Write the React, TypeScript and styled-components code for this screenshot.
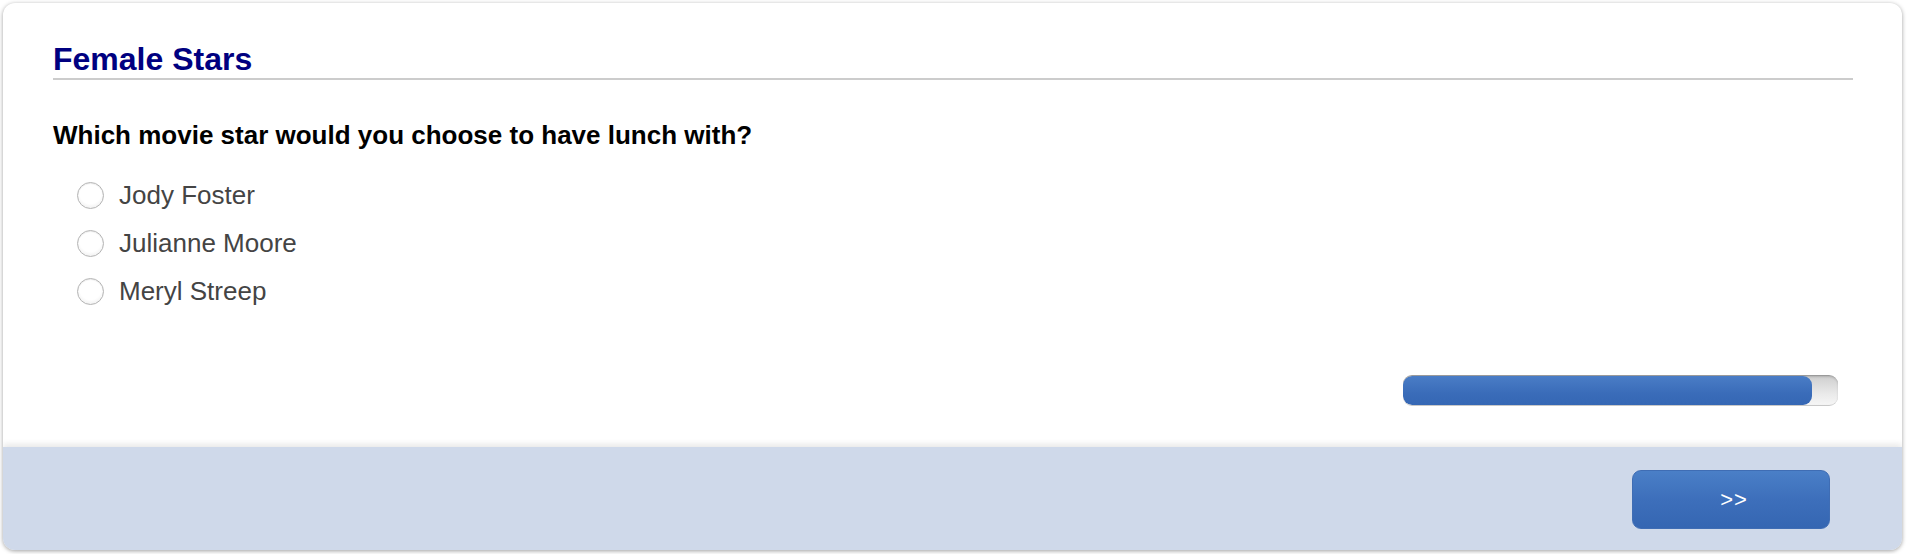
import React from "react";
import styled, { createGlobalStyle } from "styled-components";

const Global = createGlobalStyle`
  html, body { margin: 0; padding: 0; background: #ffffff; }
  body { font-family: "Liberation Sans", Arial, Helvetica, sans-serif; }
  * { box-sizing: border-box; }
`;

const Page = styled.div`
  padding: 3px 6px 4px 3px;
`;

const Card = styled.div`
  height: 547px;
  background: #ffffff;
  border-radius: 12px;
  box-shadow: 0 1px 4px rgba(0, 0, 0, 0.38);
  display: flex;
  flex-direction: column;
  overflow: hidden;
`;

const Body = styled.div`
  flex: 1;
  padding: 38px 49px 0 50px;
  display: flex;
  flex-direction: column;
`;

const Title = styled.h1`
  margin: 0;
  font-size: 32px;
  line-height: 36px;
  font-weight: 700;
  color: #000080;
  padding-bottom: 1px;
  border-bottom: 2px solid #cccccc;
`;

const Question = styled.div`
  margin-top: 40px;
  font-size: 26px;
  line-height: 30px;
  font-weight: 700;
  color: #000000;
`;

const Options = styled.div`
  margin-top: 21px;
  padding-left: 24px;
  display: flex;
  flex-direction: column;
`;

const Option = styled.label`
  height: 48px;
  display: flex;
  align-items: center;
  gap: 15px;
  font-size: 26px;
  color: #444444;
  cursor: pointer;
`;

const Radio = styled.span`
  width: 27px;
  height: 27px;
  border-radius: 50%;
  border: 1px solid #b4b4b4;
  background: radial-gradient(circle at 50% 40%, #ffffff 55%, #f0f0f0 80%, #e2e2e2 100%);
  box-shadow: inset 0 1px 1px rgba(0, 0, 0, 0.08);
  flex: none;
`;

const ProgressRow = styled.div`
  margin-top: 60px;
  display: flex;
  justify-content: flex-end;
  padding-right: 15px;
`;

const Track = styled.div`
  width: 435px;
  height: 31px;
  border-radius: 9px;
  background: linear-gradient(#cfcfcf, #e9e9e9 60%, #f6f6f6);
  border-top: 1px solid #9a9a9a;
  border-bottom: 1px solid #c8c8c8;
  box-shadow: inset 0 1px 2px rgba(0, 0, 0, 0.15);
  overflow: hidden;
  display: flex;
`;

const Fill = styled.div`
  height: 100%;
  border-radius: 9px;
  background: linear-gradient(#4a7dc6, #3a6cb9 60%, #3567b4);
`;

const Footer = styled.div`
  height: 103px;
  flex: none;
  background: #cfd9ea;
  box-shadow: 0 -3px 6px rgba(0, 0, 0, 0.09);
  display: flex;
  align-items: center;
  justify-content: flex-end;
  padding: 2px 72px 0 0;
`;

const NextButton = styled.button`
  width: 198px;
  height: 59px;
  border-radius: 9px;
  border: 1px solid #3f6db4;
  background: linear-gradient(#4a7fc7, #3d6fbb 50%, #3566b2);
  color: #ffffff;
  font-family: "Liberation Sans", Arial, sans-serif;
  font-size: 22px;
  letter-spacing: 1px;
  padding: 0 0 0 6px;
  cursor: pointer;
`;

const choices = ["Jody Foster", "Julianne Moore", "Meryl Streep"];

export default function App() {
  const progress = 94;
  return (
    <>
      <Global />
      <Page>
        <Card>
          <Body>
            <Title>Female Stars</Title>
            <Question>Which movie star would you choose to have lunch with?</Question>
            <Options>
              {choices.map((c) => (
                <Option key={c}>
                  <Radio />
                  {c}
                </Option>
              ))}
            </Options>
            <ProgressRow>
              <Track>
                <Fill style={{ width: `${progress}%` }} />
              </Track>
            </ProgressRow>
          </Body>
          <Footer>
            <NextButton>&gt;&gt;</NextButton>
          </Footer>
        </Card>
      </Page>
    </>
  );
}
